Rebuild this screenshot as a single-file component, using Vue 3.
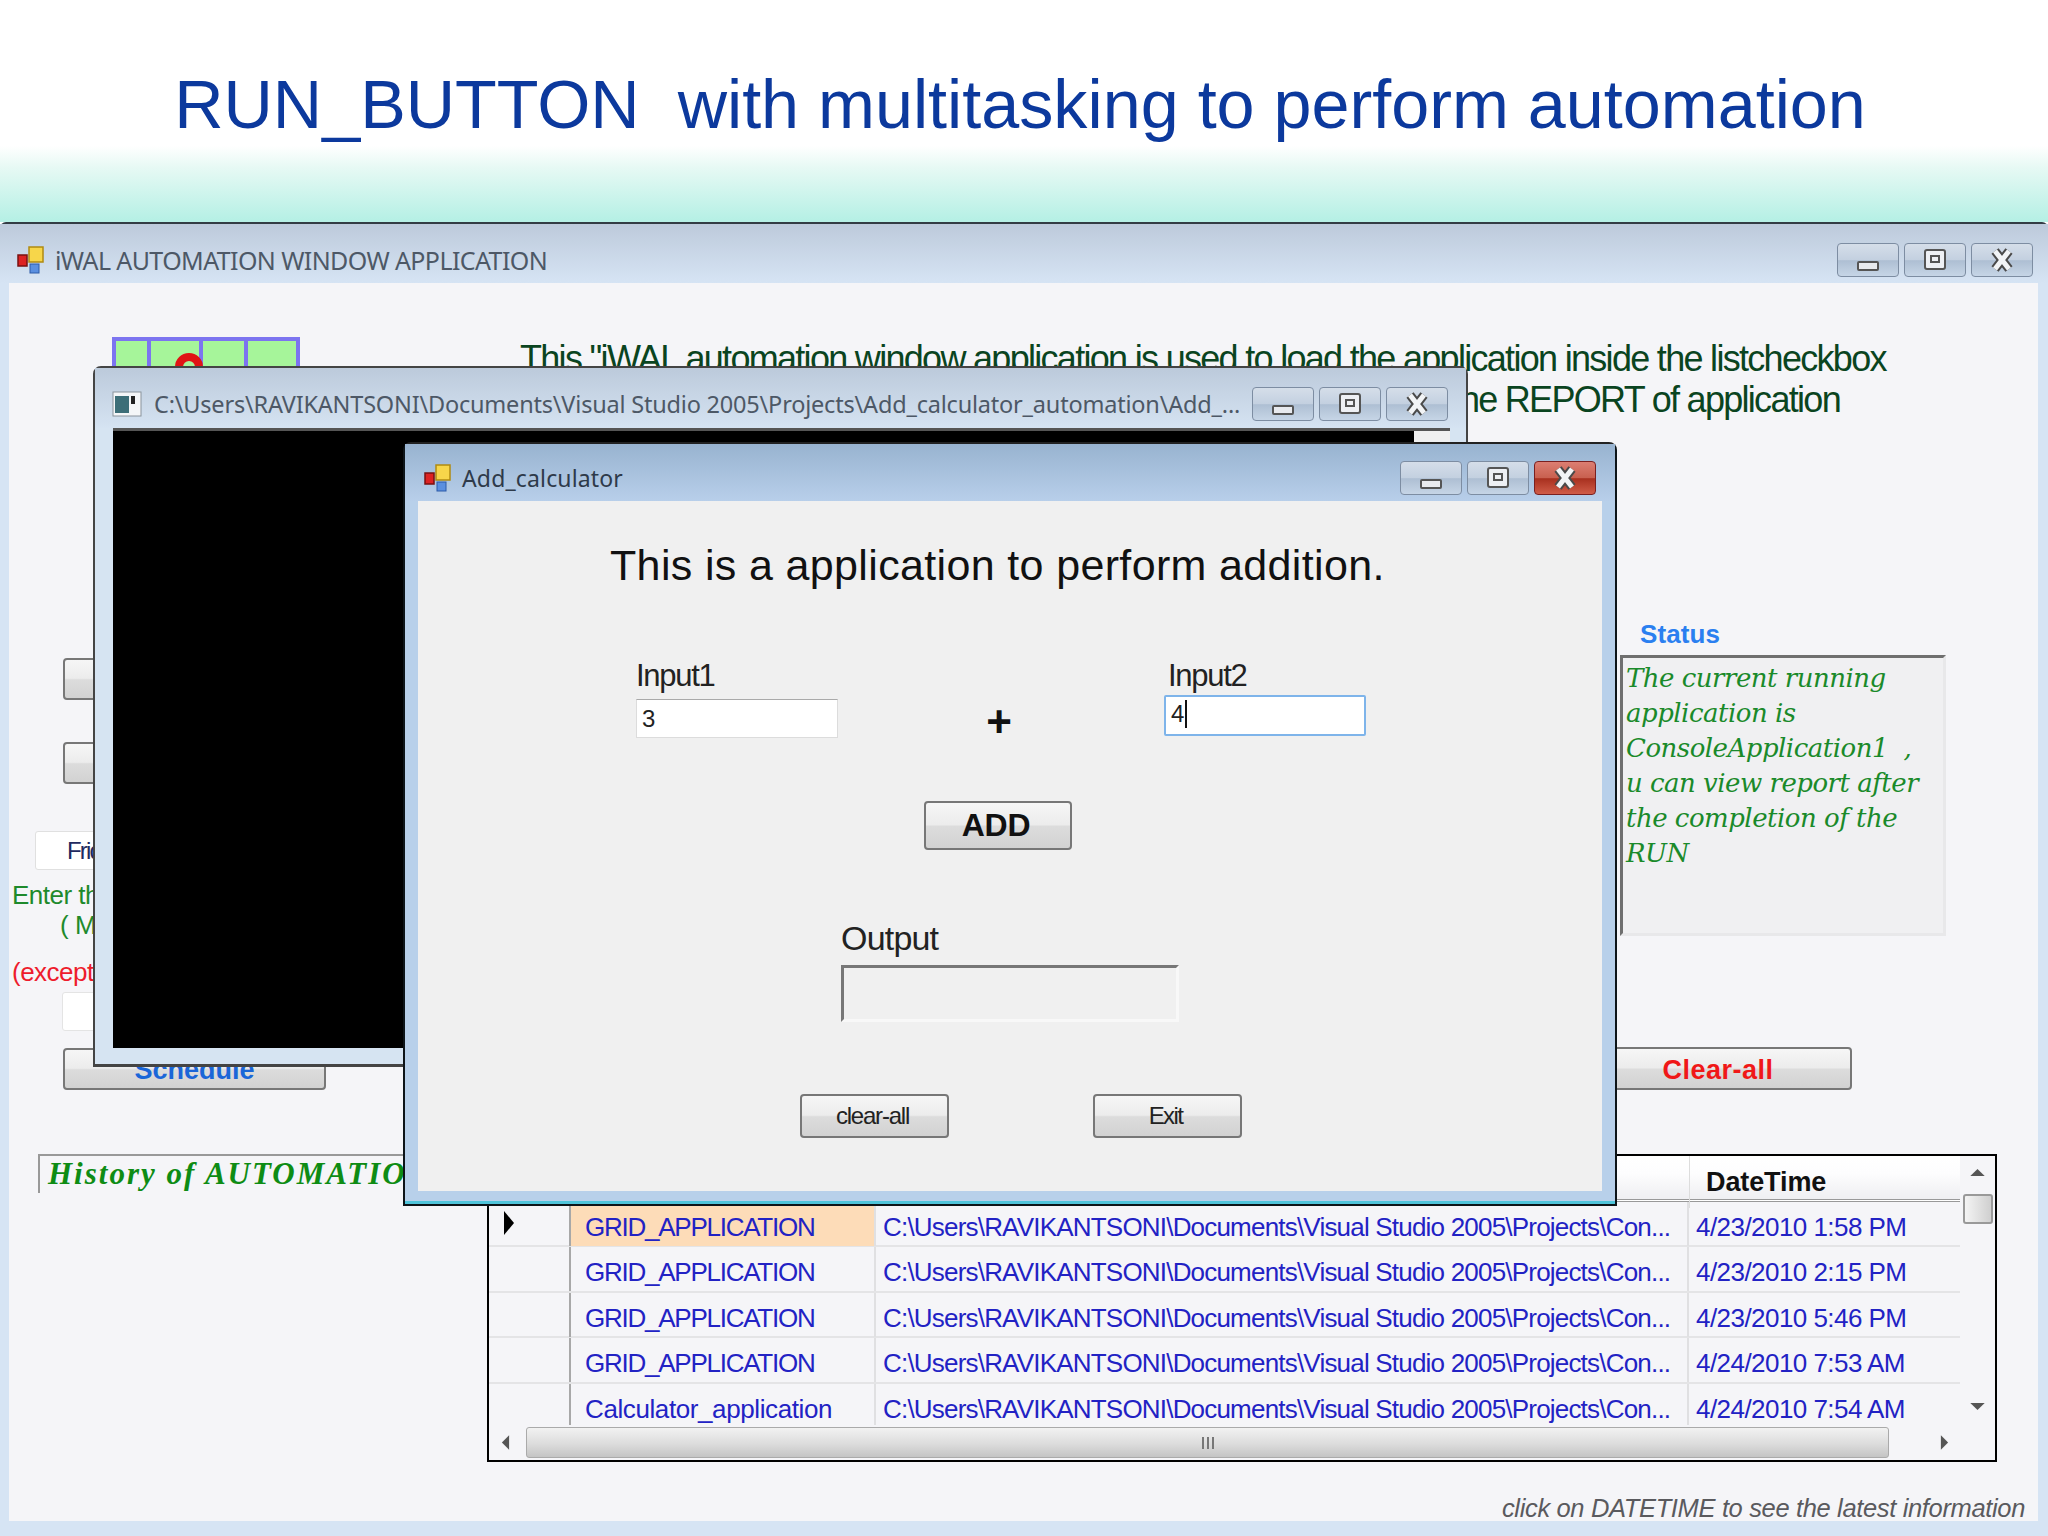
<script setup>
const headline = 'RUN_BUTTON  with multitasking to perform automation'
const rows = [
  { name: 'GRID_APPLICATION', date: '4/23/2010 1:58 PM', active: true },
  { name: 'GRID_APPLICATION', date: '4/23/2010 2:15 PM' },
  { name: 'GRID_APPLICATION', date: '4/23/2010 5:46 PM' },
  { name: 'GRID_APPLICATION', date: '4/24/2010 7:53 AM' },
  { name: 'Calculator_application', date: '4/24/2010 7:54 AM', lower: true }
]
const path = 'C:\\Users\\RAVIKANTSONI\\Documents\\Visual Studio 2005\\Projects\\Con...'
const status = ['The current running', 'application is', 'ConsoleApplication1  ,', 'u can view report after', 'the completion of the', 'RUN']
</script>

<template>
  <div class="slide">
    <header class="banner">
      <h1 class="headline">{{ headline }}</h1>
    </header>

    <div class="desktop">
      <section class="win win-main">
        <div class="titlebar main-bar">
          <svg class="appicon" viewBox="0 0 28 28"><rect x="1" y="9" width="9" height="11" fill="#d22" stroke="#7a1010" stroke-width="1.5"/><rect x="12" y="1" width="14" height="15" fill="#f7d64a" stroke="#b08a10" stroke-width="1.5"/><rect x="13" y="18" width="9" height="9" fill="#5a8fe0" stroke="#2c5aa8"/></svg>
          <span class="wintitle main-title">iWAL AUTOMATION WINDOW APPLICATION</span>
          <div class="winbtns">
            <button class="wbtn"><svg viewBox="0 0 62 34"><rect x="21" y="19" width="20" height="8" rx="1" fill="#e8eaee" stroke="#555" stroke-width="2"/></svg></button>
            <button class="wbtn"><svg viewBox="0 0 62 34"><rect x="21" y="7" width="20" height="19" rx="2" fill="#eef0f4" stroke="#555" stroke-width="2"/><rect x="27" y="13" width="8" height="6" fill="none" stroke="#555" stroke-width="2"/></svg></button>
            <button class="wbtn"><svg viewBox="0 0 62 34"><path d="M24 8 L38 26 M38 8 L24 26" stroke="#4a4a4a" stroke-width="9"/><path d="M24 8 L38 26 M38 8 L24 26" stroke="#f2f4f6" stroke-width="5"/></svg></button>
          </div>
        </div>

        <div class="main-client">
          <div class="upper">
            <div class="leftcol">
              <div class="pic">
                <span class="cell c1"></span><span class="cell c2"><i class="ring"></i></span><span class="cell c3"></span><span class="cell c4"></span>
              </div>
              <div class="gbtn side-btn first"></div>
              <div class="gbtn side-btn second"></div>
              <div class="combo">Friday</div>
              <p class="lbl green enter">Enter the time</p>
              <p class="lbl green mm">( MM )</p>
              <p class="lbl red except">(except</p>
              <div class="field"></div>
              <div class="gbtn side-btn schedule">Schedule</div>
            </div>

            <div class="rightcol">
              <p class="desc line1">This "iWAL automation window application is used to load the application inside the listcheckbox</p>
              <p class="desc line2">the REPORT of application</p>
              <div class="status-block">
                <div class="status-label">Status</div>
                <div class="status-box">
                  <div v-for="l in status" :key="l" class="status-line">{{ l }}</div>
                </div>
              </div>
              <div class="gbtn clear-main">Clear-all</div>
            </div>
          </div>

          <div class="lower">
            <div class="history">History of AUTOMATION</div>
            <div class="gridbox">
              <div class="grid-main">
                <div class="grid-head">
                  <span class="h-rowhdr"></span>
                  <span class="h-name"></span>
                  <span class="h-path"></span>
                  <span class="h-date">DateTime</span>
                </div>
                <div v-for="(r, i) in rows" :key="i" class="grid-row">
                  <span class="rowhdr"><svg v-if="r.active" viewBox="0 0 10 24" class="rowarrow"><path d="M0 0 L10 12 L0 24 Z" fill="#000"/></svg></span>
                  <span class="cell-name" :class="{ active: r.active, lowername: r.lower }">{{ r.name }}</span>
                  <span class="cell-path">{{ path }}</span>
                  <span class="cell-date">{{ r.date }}</span>
                </div>
              </div>
              <div class="vscroll">
                <svg class="arrow" viewBox="0 0 16 10"><path d="M0 9 L8 1 L16 9 Z" fill="#555"/></svg>
                <div class="vthumb"></div>
                <svg class="arrow down" viewBox="0 0 16 10"><path d="M0 1 L8 9 L16 1 Z" fill="#555"/></svg>
              </div>
              <div class="hscroll">
                <svg class="harrow" viewBox="0 0 10 16"><path d="M9 0 L1 8 L9 16 Z" fill="#555"/></svg>
                <div class="hthumb"><span class="grip"><i></i><i></i><i></i></span></div>
                <svg class="harrow" viewBox="0 0 10 16"><path d="M1 0 L9 8 L1 16 Z" fill="#555"/></svg>
              </div>
            </div>
          </div>

          <p class="hint">click on DATETIME to see the latest information</p>
        </div>
      </section>

      <section class="win win-console">
        <div class="titlebar console-bar">
          <svg class="conicon" viewBox="0 0 30 26"><rect x="1" y="1" width="28" height="24" fill="#f4f6f8" stroke="#8a939c"/><rect x="3" y="5" width="14" height="17" fill="#3c6e78"/><rect x="19" y="5" width="4" height="8" fill="#222"/></svg>
          <span class="wintitle console-title">C:\Users\RAVIKANTSONI\Documents\Visual Studio 2005\Projects\Add_calculator_automation\Add_...</span>
          <div class="winbtns">
            <button class="wbtn"><svg viewBox="0 0 62 34"><rect x="21" y="19" width="20" height="8" rx="1" fill="#e8eaee" stroke="#555" stroke-width="2"/></svg></button>
            <button class="wbtn"><svg viewBox="0 0 62 34"><rect x="21" y="7" width="20" height="19" rx="2" fill="#eef0f4" stroke="#555" stroke-width="2"/><rect x="27" y="13" width="8" height="6" fill="none" stroke="#555" stroke-width="2"/></svg></button>
            <button class="wbtn"><svg viewBox="0 0 62 34"><path d="M24 8 L38 26 M38 8 L24 26" stroke="#4a4a4a" stroke-width="9"/><path d="M24 8 L38 26 M38 8 L24 26" stroke="#f2f4f6" stroke-width="5"/></svg></button>
          </div>
        </div>
        <div class="console-body">
          <div class="console-black"></div>
          <div class="console-scroll"></div>
        </div>
      </section>

      <section class="win win-calc">
        <div class="titlebar calc-bar">
          <svg class="appicon calc-icon" viewBox="0 0 28 28"><rect x="1" y="9" width="9" height="11" fill="#d22" stroke="#7a1010" stroke-width="1.5"/><rect x="12" y="1" width="14" height="15" fill="#f7d64a" stroke="#b08a10" stroke-width="1.5"/><rect x="13" y="18" width="9" height="9" fill="#5a8fe0" stroke="#2c5aa8"/></svg>
          <span class="wintitle calc-title">Add_calculator</span>
          <div class="winbtns">
            <button class="wbtn"><svg viewBox="0 0 62 34"><rect x="21" y="19" width="20" height="8" rx="1" fill="#e8eaee" stroke="#555" stroke-width="2"/></svg></button>
            <button class="wbtn"><svg viewBox="0 0 62 34"><rect x="21" y="7" width="20" height="19" rx="2" fill="#eef0f4" stroke="#555" stroke-width="2"/><rect x="27" y="13" width="8" height="6" fill="none" stroke="#555" stroke-width="2"/></svg></button>
            <button class="wbtn close"><svg viewBox="0 0 62 34"><path d="M24 8 L38 26 M38 8 L24 26" stroke="#4a4a4a" stroke-width="9"/><path d="M24 8 L38 26 M38 8 L24 26" stroke="#f2f4f6" stroke-width="5"/></svg></button>
          </div>
        </div>
        <div class="calc-client">
          <h2 class="calc-heading">This is a application to perform addition.</h2>
          <div class="calc-inputs">
            <div class="calc-col col1">
              <label class="calc-lbl">Input1</label>
              <div class="calc-input">3</div>
            </div>
            <div class="plus">+</div>
            <div class="calc-col col2">
              <label class="calc-lbl lbl2">Input2</label>
              <div class="calc-input focused">4<i class="caret"></i></div>
            </div>
          </div>
          <div class="add-row"><div class="gbtn add-btn">ADD</div></div>
          <div class="out-col">
            <label class="out-lbl">Output</label>
            <div class="out-box"></div>
          </div>
          <div class="calc-actions">
            <div class="gbtn small-btn">clear-all</div>
            <div class="gbtn small-btn exit">Exit</div>
          </div>
        </div>
      </section>
    </div>
  </div>
</template>

<style>
html, body { margin: 0; padding: 0; background: #fff; }
</style>

<style scoped>
.slide { width: 2048px; height: 1536px; display: flex; flex-direction: column; overflow: hidden; font-family: "Liberation Sans", Arial, sans-serif; }
.banner { height: 222px; flex: none; box-sizing: border-box; padding-top: 58px; display: flex; justify-content: center; background: linear-gradient(#ffffff 0, #ffffff 146px, #e6f9f4 168px, #b6f0e5 220px); }
.headline { margin: 0; font-weight: 400; font-size: 68.3px; line-height: 92px; color: #0c399d; white-space: pre; transform: translateX(-4px); }
.desktop { flex: 1; position: relative; }

/* windows */
.win { box-sizing: border-box; display: flex; flex-direction: column; }
.win-main { height: 100%; border-top: 2px solid #333c44; border-radius: 6px 6px 0 0; background: #d6e4f4; }
.win-console { position: absolute; left: 93px; top: 144px; width: 1375px; height: 701px; background: #d6e4f2; border: 2px solid #444; border-bottom-width: 3px; border-radius: 8px 8px 0 0; }
.win-calc { position: absolute; left: 403px; top: 220px; width: 1214px; height: 764px; background: #b8d0ea; border: 2px solid #0d1418; border-top-color: #222; border-radius: 8px 8px 0 0; box-shadow: inset 0 -3px 0 #4fc4da; }

.titlebar { display: flex; align-items: center; flex: none; box-sizing: border-box; }
.main-bar { height: 59px; padding: 13px 15px 0 17px; background: linear-gradient(#bdcadb, #d6e4f4); }
.console-bar { height: 60px; padding: 11px 18px 0 17px; background: linear-gradient(#bccadb, #d5e3f2); }
.calc-bar { height: 57px; padding: 10px 19px 0 19px; background: linear-gradient(#98b3d0, #b8cfea); }

.appicon { width: 28px; height: 28px; flex: none; }
.conicon { width: 30px; height: 26px; flex: none; }
.wintitle { font-family: "Noto Sans", sans-serif; white-space: nowrap; color: #4d5866; }
.main-title { margin-left: 10px; font-size: 25px; letter-spacing: -0.6px; }
.console-title { margin-left: 12px; font-size: 23.5px; letter-spacing: -0.2px; }
.calc-title { margin-left: 10px; font-size: 23px; letter-spacing: 0.15px; color: #2e3a4a; }
.winbtns { margin-left: auto; display: flex; gap: 5px; }
.wbtn { width: 62px; height: 34px; padding: 0; box-sizing: border-box; border: 1.5px solid #7d8da2; border-radius: 4px; background: linear-gradient(#d5dee9 0, #c3d0e0 50%, #aebfd3 52%, #c6d5e6 100%); display: block; }
.wbtn svg { display: block; margin: -1.5px; width: 62px; height: 34px; }
.wbtn.close { background: linear-gradient(#dc7e72 0, #c8604f 50%, #a8301f 52%, #d05c48 100%); border-color: #7a2020; }

/* main form */
.main-client { flex: none; box-sizing: border-box; margin: 0 10px 0 9px; padding-left: 1px; height: 1238px; width: 2029px; background: #f5f5f8; display: flex; flex-direction: column; }
.upper { height: 871px; flex: none; display: flex; }
.leftcol { width: 510px; flex: none; display: flex; flex-direction: column; align-items: flex-start; }
.pic { margin: 54px 0 0 102px; width: 188px; height: 100px; box-sizing: border-box; border: 4px solid #7c74f0; display: flex; background: #7c74f0; gap: 4px; }
.cell { background: #a6f59a; display: block; position: relative; }
.c1 { width: 31px; } .c2 { width: 48px; } .c3 { width: 41px; } .c4 { flex: 1; }
.ring { position: absolute; left: 24px; top: 12px; width: 12px; height: 12px; border: 8px solid #e01414; border-radius: 50%; }

.gbtn { box-sizing: border-box; border: 2px solid #777; border-radius: 4px; background: linear-gradient(#f6f6f6 0, #ececec 48%, #dcdcdc 52%, #d2d2d2 100%); display: flex; align-items: center; justify-content: center; }
.side-btn { margin-left: 53px; width: 263px; height: 42px; }
.side-btn.first { margin-top: 221px; }
.side-btn.second { margin-top: 42px; }
.side-btn.schedule { margin-top: 17px; font-size: 27px; font-weight: 700; color: #1a66d8; padding-top: 3px; height: 42px; }

.combo { margin: 47px 0 0 25px; box-sizing: border-box; width: 200px; height: 39px; background: #fff; border: 1px solid #e0e0e0; border-radius: 3px; padding-left: 31px; font-size: 24px; line-height: 37px; letter-spacing: -1.8px; color: #222a60; }
.lbl { margin: 0; font-size: 26px; line-height: 30px; white-space: nowrap; letter-spacing: -0.5px; }
.green { color: #1e8a2c; }
.red { color: #ee1c2c; }
.enter { margin: 10px 0 0 2px; }
.mm { margin: 0 0 0 50px; }
.except { margin: 17px 0 0 2px; }
.field { margin: 5px 0 0 52px; width: 200px; height: 39px; box-sizing: border-box; background: #fff; border: 1px solid #e4e4e4; border-radius: 3px; }

.rightcol { flex: 1; min-width: 0; display: flex; flex-direction: column; }
.desc { margin: 0; font-size: 36px; line-height: 41px; color: #0a4420; white-space: nowrap; letter-spacing: -1.7px; }
.line1 { margin-top: 55px; }
.line2 { margin-right: 198px; text-align: right; }
.status-block { margin: 199px 0 0 1100px; width: 326px; }
.status-label { margin-left: 20px; font-size: 26px; line-height: 30px; font-weight: 700; color: #2a7ff0; letter-spacing: 0.1px; }
.status-box { margin-top: 6px; box-sizing: border-box; height: 281px; background: #f0f0f2; border: 3px solid #e8e8ea; border-top-color: #6f6f6f; border-left-color: #6f6f6f; padding: 3px 0 0 3px; }
.status-line { font-family: "DejaVu Serif", serif; font-style: italic; font-size: 26px; line-height: 35px; letter-spacing: -0.5px; color: #1a8a2a; white-space: pre; }
.clear-main { margin: 111px 0 0 1069px; width: 263px; height: 43px; padding: 3px 5px 0 0; font-size: 27px; font-weight: 700; color: #f01818; letter-spacing: 0.5px; }

.lower { display: flex; align-items: flex-start; flex: none; height: 308px; }
.history { margin-left: 28px; width: 420px; height: 39px; box-sizing: border-box; border-top: 2px solid #999; border-left: 2px solid #999; padding-left: 8px; font-family: "Liberation Serif", serif; font-style: italic; font-weight: 700; font-size: 31px; line-height: 36px; color: #0e8c14; white-space: nowrap; letter-spacing: 2px; }
.gridbox { margin-left: 29px; box-sizing: border-box; width: 1510px; height: 308px; border: 2px solid #000; display: grid; grid-template-columns: 1fr 35px; grid-template-rows: 1fr 35px; background: #f5f5f8; }
.grid-main { min-height: 0; overflow: hidden; }
.grid-head { display: grid; grid-template-columns: 82px 305px 813px 1fr; height: 46px; box-sizing: border-box; border-bottom: 3px double #999; background: linear-gradient(#fff 0, #fdfdfe 40%, #efeff2 100%); }
.h-date { border-left: 1px solid #ddd; padding-left: 16px; font-size: 27px; line-height: 52px; font-weight: 700; color: #111; letter-spacing: -0.1px; }
.grid-row { display: grid; grid-template-columns: 82px 305px 813px 1fr; height: 45.4px; box-sizing: border-box; border-bottom: 2px solid #e4e4e6; font-size: 26px; line-height: 38px; color: #2222c4; }
.rowhdr { border-right: 2px solid #a8a8a8; position: relative; }
.rowarrow { position: absolute; left: 15px; top: 9px; width: 10px; height: 24px; }
.cell-name, .cell-path, .cell-date { padding-top: 6px; white-space: nowrap; }
.cell-name { padding-left: 14px; border-right: 2px solid #e0e0e2; letter-spacing: -1.25px; }
.cell-name.lowername { letter-spacing: -0.4px; }
.cell-name.active { background: #fddcb8; }
.cell-path { padding-left: 7px; border-right: 2px solid #e0e0e2; letter-spacing: -0.8px; overflow: hidden; }
.cell-date { padding-left: 7px; letter-spacing: -0.55px; }
.vscroll { grid-row: 1; grid-column: 2; display: flex; flex-direction: column; align-items: center; padding-top: 12px; }
.arrow { width: 15px; height: 9px; flex: none; }
.vthumb { margin-top: 17px; width: 30px; height: 30px; box-sizing: border-box; border: 2px solid #999; border-radius: 3px; background: linear-gradient(90deg, #f4f4f4, #cfcfcf); }
.arrow.down { margin-top: auto; margin-bottom: 14px; }
.hscroll { grid-row: 2; grid-column: 1 / 3; display: flex; align-items: center; padding: 0 46px 0 12px; }
.harrow { width: 9px; height: 15px; flex: none; }
.hthumb { margin: 0 51px 0 16px; flex: 1; height: 31px; box-sizing: border-box; border: 1px solid #aaa; border-radius: 3px; background: linear-gradient(#f2f2f2 0, #dcdcdc 55%, #c4c4c4 100%); display: flex; align-items: center; justify-content: center; }
.grip { display: flex; gap: 3px; }
.grip i { width: 2px; height: 12px; background: #777; display: block; }
.hint { margin: 31px 13px 0 0; font-size: 25.5px; line-height: 30px; font-style: italic; color: #5a5a5e; letter-spacing: -0.35px; text-align: right; }

/* console */
.console-body { margin: 0 16px 0 18px; height: 617px; display: flex; border-top: 3px solid #555; background: #000; }
.console-black { flex: 1; background: #000; }
.console-scroll { width: 36px; background: #f0f0f0; }

/* calculator */
.calc-client { margin: 0 13px; height: 690px; background: #f0f0f0; display: flex; flex-direction: column; }
.calc-heading { margin: 40px 0 0 192px; font-weight: 400; font-size: 43px; line-height: 48px; color: #111; white-space: nowrap; letter-spacing: 0.35px; }
.calc-inputs { display: flex; height: 145px; margin-top: 67px; align-items: flex-start; }
.calc-col { display: flex; flex-direction: column; }
.col1 { margin-left: 218px; width: 202px; }
.col2 { width: 202px; margin-left: 151px; }
.calc-lbl { font-size: 31px; line-height: 40px; letter-spacing: -1.3px; color: #222; }
.lbl2 { margin-left: 4px; }
.plus { margin: 44px 0 0 147px; width: 28px; font-size: 44px; line-height: 44px; font-weight: 700; color: #111; text-align: center; }
.calc-input { box-sizing: border-box; height: 39px; background: #fff; border: 1px solid #dcdcdc; border-top-color: #aaa; padding-left: 5px; font-size: 24px; line-height: 37px; letter-spacing: -0.5px; color: #222; margin-top: 3px; }
.calc-input.focused { height: 41px; margin-top: -1px; border: 2px solid #7eb4ea; border-radius: 2px; line-height: 34px; }
.caret { display: inline-block; width: 2px; height: 28px; background: #111; vertical-align: -6px; margin-left: 1px; }
.add-row { margin: 0 0 0 506px; }
.add-btn { width: 148px; height: 49px; padding-right: 4px; font-size: 32px; font-weight: 700; color: #111; letter-spacing: -0.3px; }
.out-col { margin: 68px 0 0 423px; display: flex; flex-direction: column; }
.out-lbl { font-size: 34px; line-height: 40px; letter-spacing: -0.8px; color: #222; }
.out-box { margin-top: 7px; box-sizing: border-box; width: 338px; height: 57px; background: #f0f0f0; border: 3px solid #f8f8f8; border-top-color: #777; border-left-color: #777; }
.calc-actions { margin: 72px 0 0 382px; display: flex; gap: 144px; }
.small-btn { width: 149px; height: 44px; padding-right: 4px; font-size: 24px; letter-spacing: -1.2px; color: #222; }
.small-btn.exit { letter-spacing: -1.6px; }
</style>
